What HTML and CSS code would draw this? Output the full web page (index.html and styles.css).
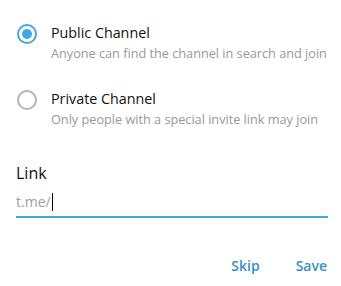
FILE: index.html
```html
<!DOCTYPE html>
<html>
<head>
<meta charset="utf-8">
<link rel="stylesheet" href="styles.css">
</head>
<body>
<div class="box">
  <div class="option">
    <span class="radio checked"></span>
    <div class="texts">
      <div class="title">Public Channel</div>
      <div class="sub">Anyone can find the channel in search and join</div>
    </div>
  </div>
  <div class="option second">
    <span class="radio"></span>
    <div class="texts">
      <div class="title">Private Channel</div>
      <div class="sub">Only people with a special invite link may join</div>
    </div>
  </div>
  <div class="field">
    <div class="label">Link</div>
    <div class="input"><span class="prefix">t.me/</span><span class="caret"></span></div>
  </div>
  <div class="buttons">
    <span class="btn">Skip</span>
    <span class="btn">Save</span>
  </div>
</div>
</body>
</html>
```
FILE: styles.css
```css
html, body { margin: 0; padding: 0; background: #fff; }
body { font-family: "Open Sans", sans-serif; width: 341px; height: 286px; overflow: hidden; }
.box { padding: 24px 13px 0 16px; }
.option { display: flex; align-items: flex-start; }
.option.second { margin-top: 28px; }
.radio { width: 16px; height: 16px; border: 2px solid #b3b3b3; border-radius: 50%; box-sizing: content-box; flex: none; margin: 0 14px 0 1px; position: relative; }
.radio.checked { border-color: #40a7e3; }
.radio.checked::after { content: ""; position: absolute; left: 3px; top: 3px; width: 10px; height: 10px; border-radius: 50%; background: #40a7e3; }
.title { font-size: 14.3px; line-height: 18px; color: #111; white-space: nowrap; }
.sub { font-size: 12.7px; line-height: 18px; color: #999; margin-top: 2px; white-space: nowrap; }
.field { margin-top: 35px; }
.label { font-size: 16px; line-height: 20px; color: #111; }
.input { margin-top: 7px; height: 26px; border-bottom: 2px solid #40a7e3; display: flex; align-items: flex-start; width: 312px; box-sizing: content-box; }
.prefix { font-size: 14px; line-height: 24px; color: #a0a0a0; }
.caret { width: 1px; height: 18px; background: #000; margin: 3px 0 0 1px; }
.buttons { display: flex; justify-content: flex-end; gap: 36px; margin-top: 39px; width: 311px; }
.btn { font-size: 14px; line-height: 18px; font-weight: 600; color: #3a8dc6; }
```
